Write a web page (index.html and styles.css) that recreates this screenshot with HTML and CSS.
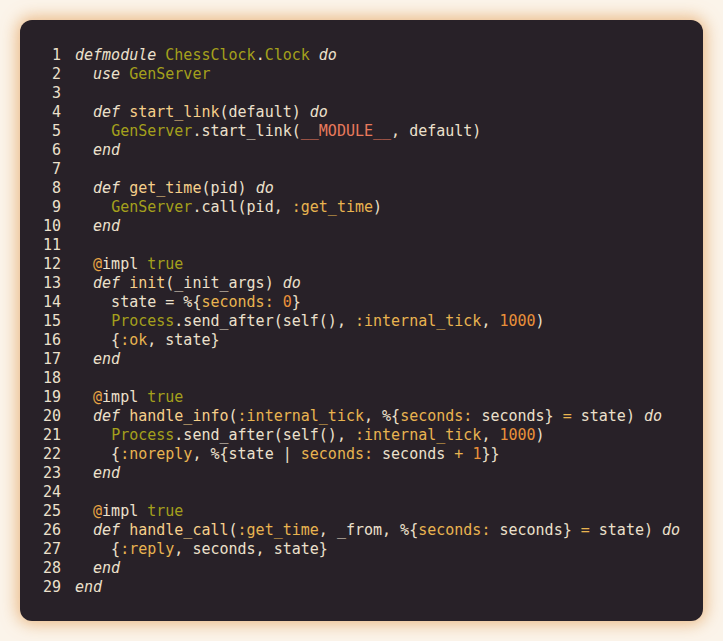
FILE: index.html
```html
<!DOCTYPE html>
<html lang="en">
<head>
<meta charset="utf-8">
<title>ChessClock.Clock</title>
<link rel="stylesheet" href="styles.css">
</head>
<body>
<div class="card">
<div class="code">
<div class="ln"><span class="n">1</span><span class="c"><span class="k">defmodule</span> <span class="m">ChessClock</span>.<span class="m">Clock</span> <span class="k">do</span></span></div>
<div class="ln"><span class="n">2</span><span class="c">  <span class="k">use</span> <span class="m">GenServer</span></span></div>
<div class="ln"><span class="n">3</span><span class="c"></span></div>
<div class="ln"><span class="n">4</span><span class="c">  <span class="k">def</span> <span class="f">start_link</span>(default) <span class="k">do</span></span></div>
<div class="ln"><span class="n">5</span><span class="c">    <span class="m">GenServer</span>.start_link(<span class="s">__MODULE__</span>, default)</span></div>
<div class="ln"><span class="n">6</span><span class="c">  <span class="k">end</span></span></div>
<div class="ln"><span class="n">7</span><span class="c"></span></div>
<div class="ln"><span class="n">8</span><span class="c">  <span class="k">def</span> <span class="f">get_time</span>(pid) <span class="k">do</span></span></div>
<div class="ln"><span class="n">9</span><span class="c">    <span class="m">GenServer</span>.call(pid, <span class="a">:get_time</span>)</span></div>
<div class="ln"><span class="n">10</span><span class="c">  <span class="k">end</span></span></div>
<div class="ln"><span class="n">11</span><span class="c"></span></div>
<div class="ln"><span class="n">12</span><span class="c">  <span class="at">@</span>impl <span class="m">true</span></span></div>
<div class="ln"><span class="n">13</span><span class="c">  <span class="k">def</span> <span class="f">init</span>(_init_args) <span class="k">do</span></span></div>
<div class="ln"><span class="n">14</span><span class="c">    state = %{<span class="a">seconds:</span> <span class="o">0</span>}</span></div>
<div class="ln"><span class="n">15</span><span class="c">    <span class="m">Process</span>.send_after(self(), <span class="a">:internal_tick</span>, <span class="o">1000</span>)</span></div>
<div class="ln"><span class="n">16</span><span class="c">    {<span class="a">:ok</span>, state}</span></div>
<div class="ln"><span class="n">17</span><span class="c">  <span class="k">end</span></span></div>
<div class="ln"><span class="n">18</span><span class="c"></span></div>
<div class="ln"><span class="n">19</span><span class="c">  <span class="at">@</span>impl <span class="m">true</span></span></div>
<div class="ln"><span class="n">20</span><span class="c">  <span class="k">def</span> <span class="f">handle_info</span>(<span class="a">:internal_tick</span>, %{<span class="a">seconds:</span> seconds} <span class="a">=</span> state) <span class="k">do</span></span></div>
<div class="ln"><span class="n">21</span><span class="c">    <span class="m">Process</span>.send_after(self(), <span class="a">:internal_tick</span>, <span class="o">1000</span>)</span></div>
<div class="ln"><span class="n">22</span><span class="c">    {<span class="a">:noreply</span>, %{state | <span class="a">seconds:</span> seconds <span class="a">+</span> <span class="o">1</span>}}</span></div>
<div class="ln"><span class="n">23</span><span class="c">  <span class="k">end</span></span></div>
<div class="ln"><span class="n">24</span><span class="c"></span></div>
<div class="ln"><span class="n">25</span><span class="c">  <span class="at">@</span>impl <span class="m">true</span></span></div>
<div class="ln"><span class="n">26</span><span class="c">  <span class="k">def</span> <span class="f">handle_call</span>(<span class="a">:get_time</span>, _from, %{<span class="a">seconds:</span> seconds} <span class="a">=</span> state) <span class="k">do</span></span></div>
<div class="ln"><span class="n">27</span><span class="c">    {<span class="a">:reply</span>, seconds, state}</span></div>
<div class="ln"><span class="n">28</span><span class="c">  <span class="k">end</span></span></div>
<div class="ln"><span class="n">29</span><span class="c"><span class="k">end</span></span></div>
</div>
</div>
</body>
</html>
```
FILE: styles.css
```css
html, body {
  margin: 0;
  padding: 0;
  background: #fbf4ea;
}
body {
  padding: 20px;
}
.card {
  width: 683px;
  box-sizing: border-box;
  background: #282128;
  border-radius: 12px;
  padding: 26px 0 24px 23px;
  box-shadow: 0 0 16px 3px rgba(228, 165, 100, 0.75);
}
.code {
  font-family: "DejaVu Sans Mono", "Liberation Mono", monospace;
  font-size: 15px;
  line-height: 19px;
  color: #ece0cc;
}
.ln {
  display: flex;
  height: 19px;
}
.n {
  width: 18px;
  text-align: right;
  margin-right: 14px;
  color: #ece0cc;
  white-space: pre;
}
.c {
  white-space: pre;
}
.k { font-style: italic; color: #ece0cc; }
.m { color: #a4a01c; }
.f { color: #f6cf8a; }
.s { color: #e87a5c; }
.a { color: #e8b450; }
.o { color: #e8903a; }
.at { color: #e8a444; }
```
